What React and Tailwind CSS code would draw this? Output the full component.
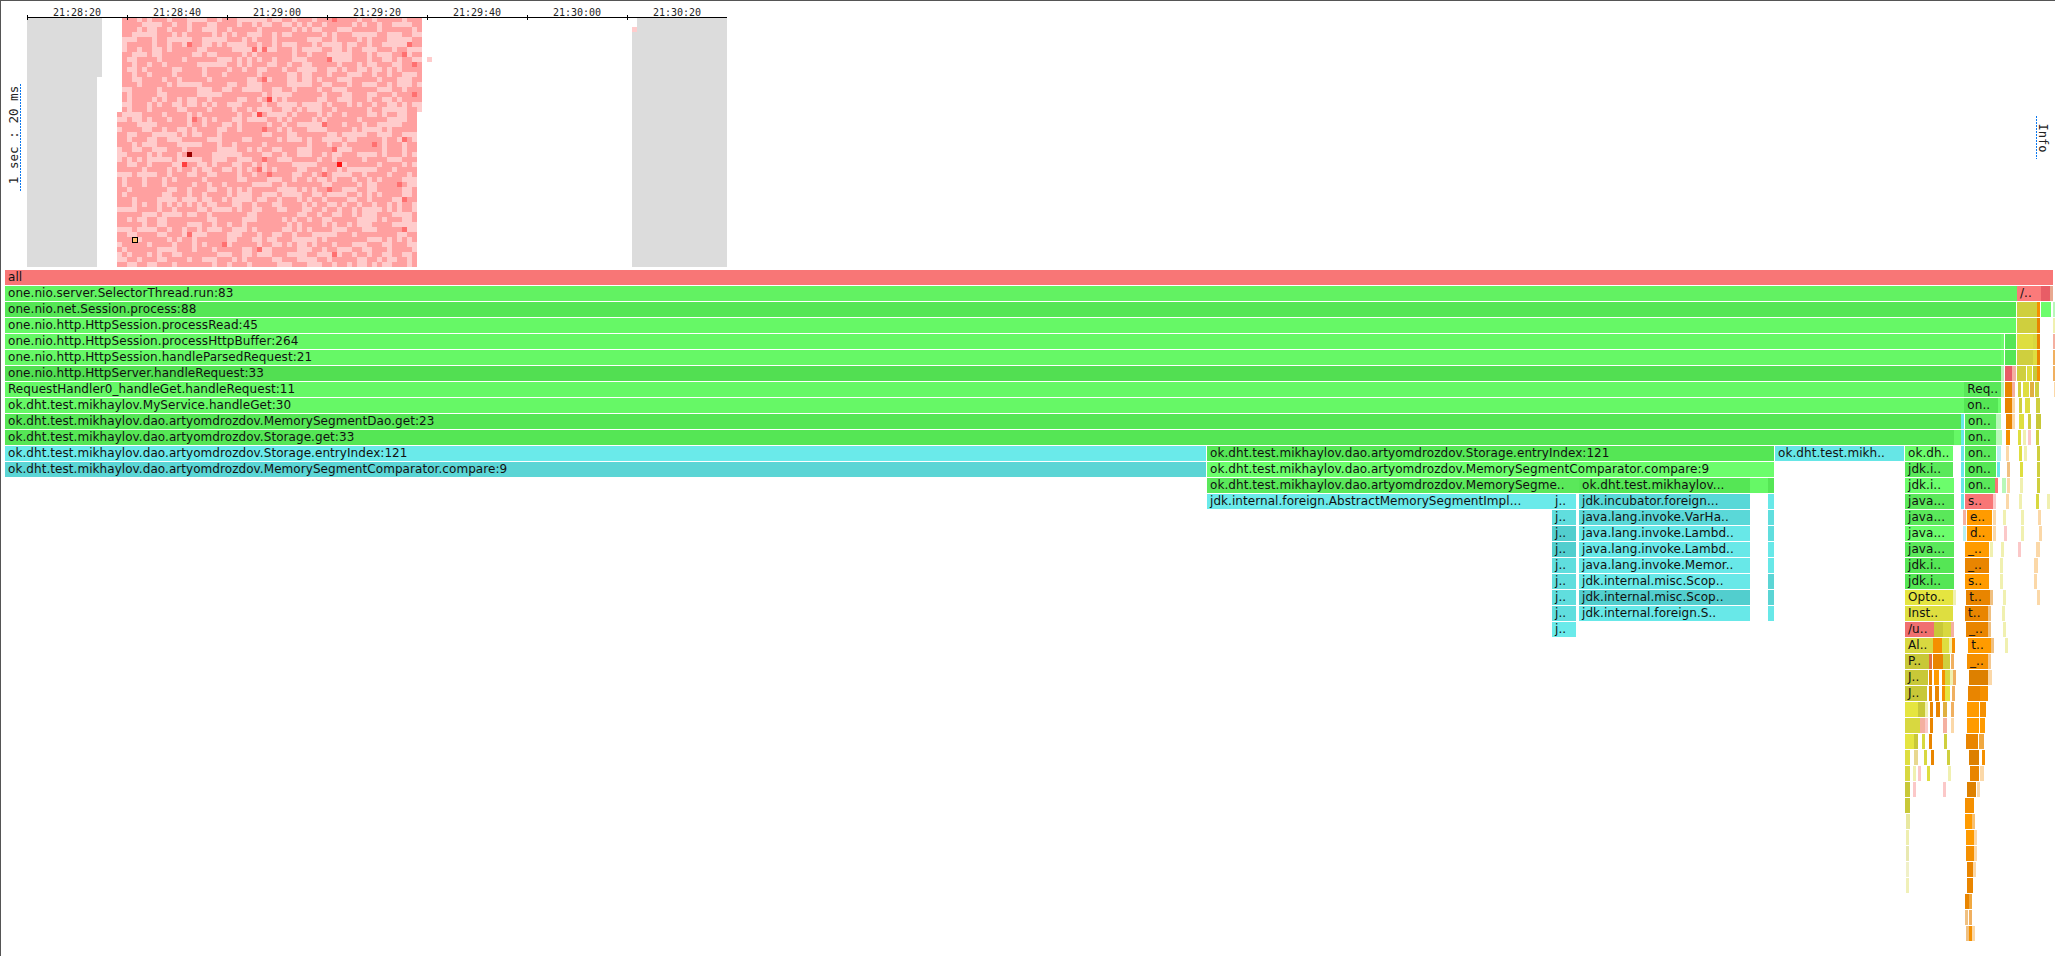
import React from "react";

const G = { a: "#62f262", b: "#55e655", c: "#66f866", d: "#52df52", e: "#6cfd6c", f: "#5ae85a" };
const C = { a: "#6aeaea", b: "#5bd5d5", c: "#52cece", d: "#60dede", e: "#68e8e8" };
const Y = { a: "#cfcf3e", b: "#dede40", c: "#e5e540", d: "#c8c838", e: "#d8d840" };
const O = { a: "#ff9b00", b: "#e98500", c: "#f59000", d: "#dd8000" };
const R = { a: "#f87676", b: "#e85d66", c: "#f07070" };
const P = { y: "#f0f0b0", o: "#fbd8a8", r: "#fbc8c8", c: "#b8f0f0", g: "#b8f8b8", s: "#f4b0a0", t: "#e8a890" };

// absolute-pixel frames: [x1, x2, colour, label]
const main = [
  [[5, 2017, G.a, "one.nio.server.SelectorThread.run:83"]],
  [[5, 2016, G.b, "one.nio.net.Session.process:88"]],
  [[5, 2004, G.c, "one.nio.http.HttpSession.processRead:45"]],
  [[5, 2001, G.c, "one.nio.http.HttpSession.processHttpBuffer:264"]],
  [[5, 2001, G.c, "one.nio.http.HttpSession.handleParsedRequest:21"]],
  [[5, 2001, G.d, "one.nio.http.HttpServer.handleRequest:33"]],
  [[5, 1964, G.c, "RequestHandler0_handleGet.handleRequest:11"]],
  [[5, 1964, G.c, "ok.dht.test.mikhaylov.MyService.handleGet:30"]],
  [[5, 1961, G.b, "ok.dht.test.mikhaylov.dao.artyomdrozdov.MemorySegmentDao.get:23"]],
  [[5, 1954, G.b, "ok.dht.test.mikhaylov.dao.artyomdrozdov.Storage.get:33"]],
  [
    [5, 1206, C.a, "ok.dht.test.mikhaylov.dao.artyomdrozdov.Storage.entryIndex:121"],
    [1207, 1774, G.b, "ok.dht.test.mikhaylov.dao.artyomdrozdov.Storage.entryIndex:121"],
    [1775, 1904, "#66e6e6", "ok.dht.test.mikh.."],
  ],
  [
    [5, 1206, C.b, "ok.dht.test.mikhaylov.dao.artyomdrozdov.MemorySegmentComparator.compare:9"],
    [1207, 1774, G.e, "ok.dht.test.mikhaylov.dao.artyomdrozdov.MemorySegmentComparator.compare:9"],
  ],
  [
    [1207, 1579, G.f, "ok.dht.test.mikhaylov.dao.artyomdrozdov.MemorySegme.."],
    [1579, 1750, G.b, "ok.dht.test.mikhaylov..."],
    [1750, 1768, G.c],
    [1768, 1774, G.b],
  ],
  [
    [1207, 1552, C.a, "jdk.internal.foreign.AbstractMemorySegmentImpl..."],
    [1552, 1576, C.a, "j.."],
    [1579, 1750, "#58d8d8", "jdk.incubator.foreign..."],
    [1768, 1774, C.e],
  ],
  [[1552, 1576, C.d, "j.."], [1579, 1750, "#5ad8d8", "java.lang.invoke.VarHa.."], [1768, 1774, C.d]],
  [[1552, 1576, C.c, "j.."], [1579, 1750, C.e, "java.lang.invoke.Lambd.."], [1768, 1774, C.d]],
  [[1552, 1576, C.c, "j.."], [1579, 1750, C.e, "java.lang.invoke.Lambd.."], [1768, 1774, C.e]],
  [[1552, 1576, C.d, "j.."], [1579, 1750, C.e, "java.lang.invoke.Memor.."], [1768, 1774, C.e]],
  [[1552, 1576, C.d, "j.."], [1579, 1750, C.e, "jdk.internal.misc.Scop.."], [1768, 1774, C.b]],
  [[1552, 1576, C.d, "j.."], [1579, 1750, C.c, "jdk.internal.misc.Scop.."], [1768, 1774, C.b]],
  [[1552, 1576, C.d, "j.."], [1579, 1750, C.e, "jdk.internal.foreign.S.."], [1768, 1774, C.e]],
  [[1552, 1576, C.a, "j.."]],
];

// right-hand frames in 3x crop units, offset 1900 for rows 1-14, 1880 for rows 15+
const right1900 = {
  1: [[351, 422, "#fb7a7a", "/.."], [422, 450, R.b], [450, 456, P.t]],
  2: [[350, 410, Y.a], [410, 417, O.c], [422, 450, G.e], [456, 462, P.g]],
  3: [[312, 348, G.c], [350, 410, Y.a], [410, 417, O.b], [456, 460, P.y]],
  4: [[303, 312, G.e], [315, 348, G.b], [350, 400, Y.b], [400, 410, Y.e], [410, 416, O.b], [456, 462, P.s]],
  5: [[303, 312, G.e], [315, 348, G.b], [350, 400, Y.a], [400, 410, Y.b], [410, 416, O.b], [456, 460, "#f0b060"]],
  6: [[303, 312, P.g], [314, 336, R.b], [336, 348, P.s], [351, 378, Y.a], [381, 396, Y.b], [400, 410, Y.d], [410, 416, O.c], [456, 460, "#f0b060"]],
  7: [[193, 303, G.f, "Req.."], [303, 312, P.g], [315, 336, O.b], [336, 343, P.s], [351, 357, Y.a], [363, 381, Y.b], [384, 396, "#e0b040"], [400, 412, Y.a], [456, 460, P.o]],
  8: [[193, 294, G.b, "on.."], [294, 303, G.e], [315, 336, O.b], [336, 339, P.o], [351, 357, Y.a], [366, 381, Y.b], [400, 412, Y.a], [456, 462, P.o]],
  9: [[183, 190, C.e], [193, 285, G.f, "on.."], [285, 300, P.g], [315, 333, O.b], [333, 339, P.o], [351, 366, Y.b], [378, 384, Y.a], [400, 414, Y.d]],
  10: [[163, 183, G.c], [183, 190, C.e], [193, 285, G.b, "on.."], [285, 303, P.g], [315, 327, O.c], [351, 360, Y.b], [366, 372, P.y], [378, 384, P.r], [400, 408, Y.a]],
  11: [[15, 160, G.e, "ok.dh.."], [183, 190, C.e], [193, 285, G.f, "on.."], [288, 300, P.c], [315, 321, P.o], [351, 358, Y.b], [366, 372, P.y], [400, 408, Y.a]],
  12: [[15, 160, G.f, "jdk.i.."], [183, 190, C.e], [193, 285, G.b, "on.."], [288, 294, C.e], [315, 321, "#f0c080"], [351, 357, Y.b], [400, 408, Y.a]],
  13: [[15, 162, G.e, "jdk.i.."], [183, 190, C.e], [193, 282, G.f, "on.."], [282, 288, R.a], [300, 312, P.g], [315, 321, P.o], [351, 357, P.y], [400, 408, Y.a]],
  14: [[15, 162, G.f, "java..."], [183, 190, C.e], [193, 276, R.a, "s.."], [276, 285, P.r], [315, 320, P.o], [351, 357, P.y], [400, 408, Y.e], [432, 435, P.y], [460, 468, P.o]],
};
const right1880 = {
  15: [[75, 222, G.f, "java..."], [249, 252, P.s], [255, 330, O.a, "e.."], [333, 339, P.o], [360, 366, P.y], [411, 417, P.y], [460, 468, P.o]],
  16: [[75, 222, G.e, "java..."], [249, 252, P.c], [255, 330, O.a, "d.."], [333, 336, P.o], [360, 366, P.r], [408, 414, P.y], [460, 468, P.o]],
  17: [[75, 222, G.f, "java..."], [255, 328, O.a, "_.."], [330, 336, P.y], [360, 366, P.y], [408, 414, P.r], [460, 471, P.o]],
  18: [[75, 222, G.b, "jdk.i.."], [255, 328, O.b, "_.."], [360, 366, P.y], [460, 471, P.o]],
  19: [[75, 222, G.b, "jdk.i.."], [255, 328, O.a, "s.."], [360, 366, P.y], [460, 465, P.o]],
  20: [[75, 220, Y.c, "Opto.."], [220, 225, P.y], [255, 326, O.b, "t.."], [326, 330, "#f0c080"], [360, 366, P.y], [460, 465, P.o]],
  21: [[75, 219, Y.b, "Inst.."], [255, 325, O.b, "t.."], [325, 328, "#f0c080"], [360, 366, P.y]],
  22: [[75, 162, R.c, "/u.."], [162, 189, Y.d], [189, 213, Y.e], [213, 219, P.s], [255, 322, O.b, "_.."], [322, 325, "#f0c080"], [360, 366, P.y]],
  23: [[75, 159, Y.e, "Al.."], [159, 186, O.c], [186, 207, Y.b], [207, 210, P.y], [211, 216, O.c], [255, 322, O.a, "t.."], [322, 327, "#f0c080"], [360, 366, P.y]],
  24: [[75, 147, Y.d, "P.."], [147, 153, "#e07040"], [156, 186, O.b], [186, 207, Y.a], [210, 216, "#f0b060"], [255, 318, O.c, "_.."], [318, 327, "#f4c890"]],
  25: [[75, 144, Y.d, "J.."], [147, 153, O.b], [159, 174, O.a], [183, 186, O.c], [186, 201, Y.e], [201, 210, P.y], [210, 216, "#f0b060"], [255, 313, O.d], [313, 325, P.o]],
  26: [[75, 141, Y.d, "J.."], [147, 153, O.b], [162, 174, O.b], [183, 186, O.c], [186, 201, Y.c], [207, 216, "#f0b060"], [255, 290, O.b], [290, 315, O.c]],
  27: [[75, 113, Y.c], [113, 135, Y.d], [135, 141, P.y], [147, 153, O.b], [162, 174, O.b], [183, 195, "#e0b040"], [207, 216, "#f0b060"], [255, 290, O.a], [293, 312, O.c]],
  28: [[75, 120, Y.e], [120, 135, P.s], [135, 141, P.r], [147, 153, O.b], [183, 195, P.s], [207, 216, P.o], [255, 290, O.a], [293, 309, O.a]],
  29: [[75, 102, Y.c], [102, 114, Y.d], [126, 135, Y.e], [147, 153, O.b], [189, 198, Y.a], [255, 290, O.b], [293, 308, "#f0a840"]],
  30: [[75, 90, Y.b], [102, 114, "#e8d890"], [132, 135, Y.e], [147, 150, O.b], [189, 198, Y.a], [255, 285, O.d], [293, 303, O.c]],
  31: [[75, 90, Y.e], [99, 105, P.y], [111, 114, P.r], [132, 135, Y.b], [189, 198, P.y], [255, 282, O.b], [285, 297, P.o]],
  32: [[75, 90, Y.d], [99, 105, P.r], [186, 192, P.r], [255, 282, O.d], [285, 291, P.o]],
  33: [[75, 90, Y.d], [255, 282, O.c]],
  34: [[78, 90, "#e8e8a0"], [255, 276, O.a], [276, 285, "#f8c070"]],
  35: [[78, 84, "#eeeeb0"], [255, 279, O.a], [279, 282, P.o]],
  36: [[78, 84, "#e8e8b0"], [255, 279, O.c], [279, 285, P.o]],
  37: [[78, 81, "#f0f0c8"], [255, 273, O.b], [273, 276, P.o]],
  38: [[78, 81, "#f0f0b8"], [255, 273, O.b]],
  39: [[255, 268, O.b], [268, 275, "#f0a840"]],
  40: [[255, 258, "#f0c080"], [261, 270, "#f0b060"]],
  41: [[258, 261, "#f0c080"], [261, 267, O.c], [267, 270, P.o]],
};

function buildRows() {
  const rows = [[[5, 2053, R.a, "all"]]];
  for (let n = 1; n <= 41; n++) {
    const list = [...(main[n - 1] || [])];
    (right1900[n] || []).forEach(([a, b, c, t]) => list.push([1900 + a / 3, 1900 + b / 3, c, t]));
    (right1880[n] || []).forEach(([a, b, c, t]) => list.push([1880 + a / 3, 1880 + b / 3, c, t]));
    rows.push(list);
  }
  return rows;
}

const hot = [
  [187, 42, "#ff7070"], [252, 47, "#ff7070"], [262, 47, "#ff7070"], [407, 42, "#ff7070"], [402, 52, "#ff7070"],
  [327, 57, "#ff7070"], [412, 62, "#ff7070"], [262, 77, "#ff7070"], [267, 97, "#ff4c4c"], [412, 92, "#ff7070"],
  [257, 112, "#ff4c4c"], [192, 117, "#ff7070"], [262, 127, "#ff7070"], [322, 122, "#ff7070"], [402, 137, "#ff7070"],
  [372, 142, "#ff7070"], [332, 147, "#ff7070"], [187, 152, "#990000"], [182, 162, "#ff4040"], [337, 162, "#ff1414"],
  [262, 157, "#ff7070"], [257, 167, "#ff7070"], [267, 172, "#ff7070"], [322, 172, "#ff7070"], [397, 182, "#ff7070"],
  [327, 187, "#ff7070"], [402, 197, "#ff7070"], [402, 227, "#ff7070"], [187, 232, "#ff7070"], [222, 242, "#ff7070"],
  [257, 247, "#ff7070"], [332, 252, "#ff7070"], [332, 17, "#ff7070"],
];

function heatCells() {
  let s = 20230517;
  const rnd = () => ((s = (s * 1664525 + 1013904223) >>> 0) / 4294967296);
  const cells = [];
  for (let y = 17; y < 267; y += 5) {
    const x0 = y < 112 ? 122 : 117;
    const x1 = y < 112 ? 422 : 417;
    let x = x0;
    let light = rnd() < 0.4;
    while (x < x1) {
      const n = light
        ? rnd() < 0.55 ? 1 : 2 + Math.floor(rnd() * rnd() * 5)
        : rnd() < 0.25 ? 1 : 2 + Math.floor(rnd() * rnd() * 7);
      const run = Math.min(x1 - x, 5 * n);
      if (light) cells.push([x, y, run]);
      x += run;
      light = !light;
    }
  }
  return cells;
}

function Header() {
  const ticks = [27, 127, 227, 327, 427, 527, 627];
  const labels = ["21:28:20", "21:28:40", "21:29:00", "21:29:20", "21:29:40", "21:30:00", "21:30:20"];
  return (
    <svg width="2054" height="269" viewBox="1 1 2054 269" className="block [font-family:'DejaVu_Sans_Mono',monospace]">
      <path d="M27 17h75v60h-5v190H27zM637 17h90v250h-95V27h5z" fill="#dcdcdc" />
      <path d="M122 17h300v95h-5v155H117V112h5z" fill="#ffa0a0" />
      {heatCells().map(([x, y, w]) => (
        <rect key={x + "-" + y} x={x} y={y} width={w} height="5" fill="#ffcccc" />
      ))}
      <rect x="427" y="57" width="5" height="5" fill="#ffcccc" />
      <rect x="632" y="27" width="5" height="5" fill="#ffcccc" />
      {hot.map(([x, y, c]) => (
        <rect key={x + "h" + y} x={x} y={y} width="5" height="5" fill={c} />
      ))}
      <rect x="132.5" y="237.5" width="5" height="5" fill="#ffc070" stroke="#000" strokeWidth="1" />
      <path d="M27 17.5H727" stroke="#000" strokeWidth="1" />
      {ticks.map((x) => (
        <path key={x} d={`M${x + 0.5} 15v5`} stroke="#000" strokeWidth="1" />
      ))}
      {labels.map((t, i) => (
        <text key={t} x={ticks[i] + 50} y="15.5" textAnchor="middle" fontSize="10" fill="#222">
          {t}
        </text>
      ))}
      <path d="M20.5 84V192" stroke="#0a78f0" strokeWidth="1" strokeDasharray="2 1" />
      <text transform="translate(18 135) rotate(-90)" textAnchor="middle" fontSize="12.6" fill="#222">
        1 sec : 20 ms
      </text>
      <path d="M2036.5 116V159" stroke="#0a78f0" strokeWidth="1" strokeDasharray="2 1" />
      <text transform="translate(2039 138) rotate(90)" textAnchor="middle" fontSize="12" fill="#222">
        Info
      </text>
    </svg>
  );
}

function Row({ frames }) {
  let cursor = 1;
  return (
    <div className="flex h-[15px] mb-px">
      {frames
        .slice()
        .sort((a, b) => a[0] - b[0])
        .map(([a, b, c, t], i) => {
          const ml = a - cursor;
          cursor = b;
          return (
            <div
              key={i}
              className="shrink-0 overflow-hidden whitespace-nowrap pl-[3px] text-[12px] leading-[15px] tracking-[0.06px] text-[#111] [text-rendering:optimizeSpeed]"
              style={{ width: b - a, marginLeft: ml, background: c }}
            >
              {t}
            </div>
          );
        })}
    </div>
  );
}

export default function App() {
  const rows = buildRows();
  return (
    <div className="h-[956px] w-[2055px] overflow-hidden border-l border-t border-[#555] bg-white [font-family:'DejaVu_Sans',sans-serif]">
      <Header />
      <div className="flex flex-col">
        {rows.map((f, i) => (
          <Row key={i} frames={f} />
        ))}
      </div>
    </div>
  );
}
